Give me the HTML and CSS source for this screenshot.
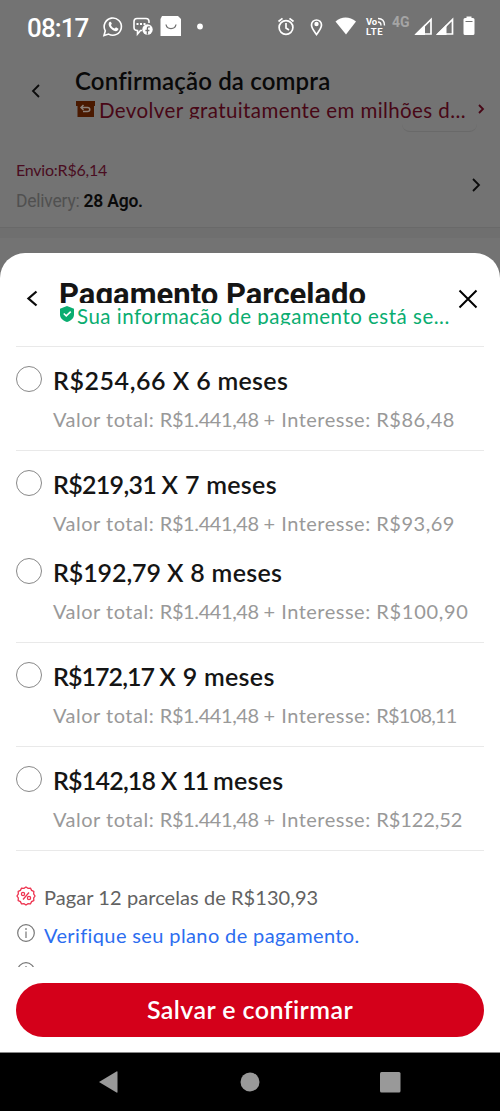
FILE: index.html
```html
<!DOCTYPE html>
<html lang="pt-BR">
<head>
<meta charset="utf-8">
<meta name="viewport" content="width=device-width">
<title>Pagamento Parcelado</title>
<link rel="stylesheet" href="styles.css">
</head>
<body>
<div class="phone">
  <header class="status">
    <span class="clock">08:17</span>
    <svg class="status-left" width="106" height="24" viewBox="0 0 106 24" fill="none" stroke="#fff" stroke-width="1.6">
      <path d="M2 20.500l1.300-4.700a8.600 8.600 0 1 1 3.300 3.300z"/>
      <path d="M7 7.500c1-1.500 2-1 2.800 1l-.8 1.800c1 2 2 2.700 3.700 3.200l1.300-1.300 2.500 1.600c-.5 3-3.500 3.200-6.500.7-3-2.500-4-4.500-3-7z" fill="#fff" stroke="none"/>
      <path d="M40 15.500h-1.500l-3 3.500v-3.500c-2 0-3.500-1-3.500-3V6.500c0-2 1-3 3-3h9c2 0 3 1 3 3V8"/>
      <path d="M34.500 9h2m1.500 0h2m1.500 0h2" stroke-width="2"/>
      <circle cx="45.500" cy="14.500" r="5.200" fill="#fff" stroke="none"/>
      <path d="M48 12c-2-.6-2.600.2-2.600 1.500v6m-2-4h4" stroke="#737373" stroke-width="1.300"/>
      <path d="M60 1h16l3 3v17H58.500V4z" fill="#fff" stroke="none"/>
      <path d="M64 9.500c1 5.500 9 5.500 10 0" stroke="#737373" stroke-width="1.300"/>
      <circle cx="98" cy="11.500" r="2.900" fill="#fff" stroke="none"/>
    </svg>
    <svg class="status-right" width="204" height="24" viewBox="0 0 204 24" fill="none" stroke="#fff" stroke-width="1.700">
      <circle cx="10" cy="12.500" r="6.900"/><path d="M2.500 6.500l4-3.200m7 0l4 3.200M10 8v5l3 2"/>
      <path d="M40.500 19.500c-3-4-5-6.500-5-9.500a5 5 0 0 1 10 0c0 3-2 5.500-5 9.500z"/><circle cx="40.500" cy="9" r="2.200" fill="#fff" stroke="none"/>
      <path d="M59.500 6.500c6-5.300 14-5.300 20.500 0L70 19.500z" fill="#fff" stroke="none"/>
      <text class="volte" x="90" y="9.500" textLength="11">Vo</text><text class="volte" x="90" y="20" textLength="16.500">LTE</text>
      <path d="M102 3.500q6.500 0 6.500 7m-6.500-3.500q3 0 3 3.500" stroke-width="1.400"/>
      <text class="net" x="116" y="12" textLength="17.500">4G</text>
      <path d="M155 4.500v14.500h-14.500z"/><path d="M138.500 20l10.500-10.500V20zM160 20l10.500-10.500V20z" fill="#fff" stroke="none"/><path d="M176.500 4.500v14.500h-14.500z"/>
      <path d="M187.500 4.500q0-1.500 1.500-1.500h1.500V1.500h5V3h1.500q1.500 0 1.500 1.500v14q0 1.500-1.500 1.500h-8q-1.500 0-1.500-1.500z" fill="#fff" stroke="none"/><path d="M189.500 6.500h7" stroke="#737373" stroke-width="1"/>
    </svg>
  </header>

  <section class="checkout">
    <svg class="back" width="9" height="14" viewBox="0 0 9 14"><path d="M8 1L2 7l6 6"/></svg>
    <div class="checkout-head">
      <h1 class="page-title">Confirmação da compra</h1>
      <div class="returns">
        <svg width="19" height="16" viewBox="0 0 19 16"><path d="M0 0h19v5h-1v11H1.500V5H0z" fill="#4a1900"/><path d="M7.500 4L5 6.500 7.500 9M5.500 6.500h6c3 0 3 4 0 4H7" fill="none" stroke="#8b8078" stroke-width="1.500"/></svg>
        <span class="returns-text">Devolver gratuitamente em milhões d...</span>
        <svg class="returns-arrow" width="7" height="10" viewBox="0 0 7 10"><path d="M1 1l4 4-4 4"/></svg>
      </div>
    </div>
    <div class="pill"></div>
  </section>
  <section class="shipping">
    <div>
      <p class="fee">Envio:R$6,14</p>
      <p class="delivery">Delivery: <b>28 Ago.</b></p>
    </div>
    <svg width="9" height="14" viewBox="0 0 9 14"><path d="M1 1l6 6-6 6"/></svg>
  </section>
  <div class="divider"></div>

  <main class="sheet">
    <div class="sheet-head">
      <svg class="sheet-back" width="12" height="17" viewBox="0 0 12 17"><path d="M10.500 1.500L2.500 8.500l8 7"/></svg>
      <div class="heading">
        <h2 class="sheet-title">Pagamento Parcelado</h2>
        <p class="secure"><svg width="14" height="16" viewBox="0 0 15 17"><path d="M7.500 0L15 3V9c0 4-3 6.500-7.500 8C3 15.500 0 13 0 9V3z" fill="#0aad70"/><path d="M4 8l2.700 2.500L11.500 6" fill="none" stroke="#fff" stroke-width="1.700"/></svg><span>Sua informação de pagamento está se...</span></p>
      </div>
      <svg class="close" width="20" height="20" viewBox="0 0 20 20"><path d="M1.500 1.500l17 17m0-17l-17 17"/></svg>
    </div>
    <ul class="plans">
      <li class="plan p1"><i class="radio"></i><div><h3><span class="amount">R$254,66 </span>X 6 meses</h3><p>Valor total: <span class="total">R$1.441,48 </span>+ Interesse: <span class="interest">R$86,48</span></p></div></li>
      <li class="plan p2"><i class="radio"></i><div><h3><span class="amount">R$219,31 </span>X 7 meses</h3><p>Valor total: <span class="total">R$1.441,48 </span>+ Interesse: <span class="interest">R$93,69</span></p></div></li>
      <li class="plan p3"><i class="radio"></i><div><h3><span class="amount">R$192,79 </span>X 8 meses</h3><p>Valor total: <span class="total">R$1.441,48 </span>+ Interesse: <span class="interest">R$100,90</span></p></div></li>
      <li class="plan p4"><i class="radio"></i><div><h3><span class="amount">R$172,17 </span>X 9 meses</h3><p>Valor total: <span class="total">R$1.441,48 </span>+ Interesse: <span class="interest">R$108,11</span></p></div></li>
      <li class="plan p5"><i class="radio"></i><div><h3><span class="amount">R$142,18 </span>X <span class="eleven">11</span> meses</h3><p>Valor total: <span class="total">R$1.441,48 </span>+ Interesse: <span class="interest">R$122,52</span></p></div></li>
    </ul>
    <div class="notes">
      <p class="note n1"><svg width="20" height="20" viewBox="0 0 20 20" fill="none" stroke="#ee3450" stroke-width="1.300"><path d="M10 1l2 1.300 2.500-.1 1.100 2.200 2.200 1.100-.1 2.500L19 10l-1.300 2 .1 2.500-2.200 1.100-1.100 2.200-2.500-.1L10 19l-2-1.300-2.500.1-1.100-2.200-2.200-1.100.1-2.500L1 10l1.300-2-.1-2.500 2.200-1.100 1.100-2.200 2.500.1z"/><path d="M13 6.500l-6 7"/><circle cx="7" cy="8" r="1.600"/><circle cx="13" cy="12" r="1.600"/></svg><span>Pagar 12 parcelas de R$130,93</span></p>
      <p class="note n2"><svg width="20" height="20" viewBox="0 0 20 20" fill="none" stroke="#777" stroke-width="1.200"><circle cx="10" cy="10" r="8.300"/><path d="M10 5v2M10 8.500v6.500"/></svg><span>Verifique seu plano de pagamento.</span></p>
      <p class="note n3"><svg width="20" height="20" viewBox="0 0 20 20" fill="none" stroke="#777" stroke-width="1.200"><circle cx="10" cy="10" r="8.300"/><path d="M10 5v2M10 8.500v6.500"/></svg><span>Caso a compra ocorra mais vezes, juros mais</span></p>
    </div>
    <button class="save"><span>Salvar e confirmar</span></button>
  </main>
  <nav class="navbar">
    <svg width="304" height="24" viewBox="0 0 304 24" fill="#999"><path d="M1 12L18.500 1.500q1-.5 1 .5v20q0 1-1 .5z"/><circle cx="152" cy="12" r="9.500"/><rect x="282" y="2" width="20.500" height="20.500" rx="1.500"/></svg>
  </nav>
</div>
</body>
</html>
```
FILE: styles.css
```css
* { box-sizing: border-box; }
body, h1, h2, h3, p, ul { margin: 0; padding: 0; }
body { font-family: Lato, "Open Sans", sans-serif; background: #737373; }
svg { flex: none; display: block; }
.phone { width: 500px; height: 1111px; overflow: hidden; display: flex; flex-direction: column; background: #737373; }
.status { height: 54px; flex: none; display: flex; padding: 15px 20px 0 27px; }
.clock { width: 75px; font: 500 26px/26px Roboto, sans-serif; color: #fff; letter-spacing: -0.9px; white-space: nowrap; }
.status-right { margin-left: auto; }
.volte { font: 700 9.500px Roboto, sans-serif; fill: #fff; stroke: none; }
.net { font: 700 14px Roboto, sans-serif; fill: #a5a5a5; stroke: none; }
.checkout { height: 78px; flex: none; display: flex; position: relative; }
.back, .returns-arrow, .shipping svg, .sheet-back, .close { fill: none; stroke: #0b0b0b; stroke-width: 1.8; }
.back { margin: 30px 35px 0 31px; }
.checkout-head { flex: 1; padding-top: 13px; }
.page-title { font-size: 24px; line-height: 28px; font-weight: 600; color: #090909; letter-spacing: 0.16px; white-space: nowrap; }
.returns { display: flex; height: 24px; overflow: hidden; padding-top: 6px; color: #480716; }
.returns > svg:first-child { margin-left: 1px; }
.returns-text { width: 374px; margin: -5px 0 0 4px; font-size: 20.5px; line-height: 28px; letter-spacing: 0.41px; white-space: nowrap; }
.returns .returns-arrow { stroke: #480716; margin: 3px 0 0 5px; }
.pill { position: absolute; left: 402px; bottom: 0; width: 75px; height: 12px; border-bottom: 1px solid #696969; border-radius: 0 0 8px 8px; }
.shipping { height: 95px; flex: none; margin-left: 16px; padding: 28px 19px 0 0; display: flex; justify-content: space-between; }
.shipping svg { margin-top: 18px; }
.fee { color: #4a0d21; font-size: 16px; line-height: 20px; letter-spacing: -0.22px; }
.delivery { font: 17.500px/24px Roboto, sans-serif; color: #505050; margin-top: 9px; letter-spacing: -0.23px; }
.delivery b { color: #0a0a0a; font-weight: 600; }
.divider { height: 26px; flex: none; background: linear-gradient(#696969 0 1px, #6f6f6f 1px 11px, #737373 11px); }
.sheet { height: 799px; flex: none; background: #fff; border-radius: 25px 25px 0 0; padding: 0 16px; }
.sheet-head { height: 94px; border-bottom: 1px solid #e9e9e9; display: flex; }
.sheet-back { margin: 37px 21px 0 10px; stroke-width: 2.3; }
.heading { width: 394px; padding-top: 24px; }
.sheet-title { font: 700 31px/35px Roboto, sans-serif; color: #151515; height: 26px; overflow: hidden; white-space: nowrap; }
.secure { display: flex; height: 22px; overflow: hidden; color: #0aad70; padding-top: 3px; font-size: 20.5px; line-height: 26px; letter-spacing: 0.5px; white-space: nowrap; }
.secure svg { margin: 0 3px 0 1px; }
.secure span { margin-top: -3px; }
.close { margin: 36px 0 0 5px; stroke: #000; stroke-width: 2; }
.plans { list-style: none; }
.plan { display: flex; height: 104px; border-bottom: 1px solid #e9e9e9; padding-top: 17px; white-space: nowrap; }
.p2 { height: 87.5px; border: 0; }
.radio { width: 26px; height: 26px; border: 1.5px solid #888; border-radius: 50%; margin: 2px 11px 0 0; flex: none; }
.plan h3 { color: #151515; font-size: 25px; line-height: 32px; font-weight: 600; letter-spacing: 0.3px; }
.plan p { color: #999; font-size: 20px; line-height: 28px; margin-top: 9px; letter-spacing: 0.5px; }
.plan .total { letter-spacing: -0.4px; }
.eleven { letter-spacing: -1.8px; margin-left: -2px; margin-right: -1px; }
.p1 .amount { letter-spacing: 0.55px; }
.p2 .amount { letter-spacing: -0.7px; }
.p3 .amount { letter-spacing: -0.1px; }
.p4 .amount { letter-spacing: -0.95px; }
.p5 .amount { letter-spacing: -0.8px; }
.p3 .interest { letter-spacing: 0.7px; }
.p4 .interest { letter-spacing: -0.8px; }
.p5 .interest { letter-spacing: -0.1px; }
.notes { height: 116px; overflow: hidden; padding-top: 32px; }
.note { display: flex; gap: 8px; height: 37.5px; color: #626262; font-size: 20px; line-height: 29px; white-space: nowrap; letter-spacing: 0.07px; }
.note svg { margin-top: 3px; }
.n2 { letter-spacing: 0.38px; }
.n2 span { color: #2c6df0; margin-top: 1px; }
.n3 span { margin-top: 1px; }
.save { display: flex; align-items: center; justify-content: center; width: 468px; height: 54px; margin-top: 16px; padding: 0 0 2px; border: 0; border-radius: 27px; background: #d4001a; color: #fff; font: 600 25px/30px Lato, sans-serif; letter-spacing: 0.42px; }
.navbar { height: 59px; flex: none; background: #000; border-top: 1px solid #888; display: flex; justify-content: center; padding-top: 17px; }
```
